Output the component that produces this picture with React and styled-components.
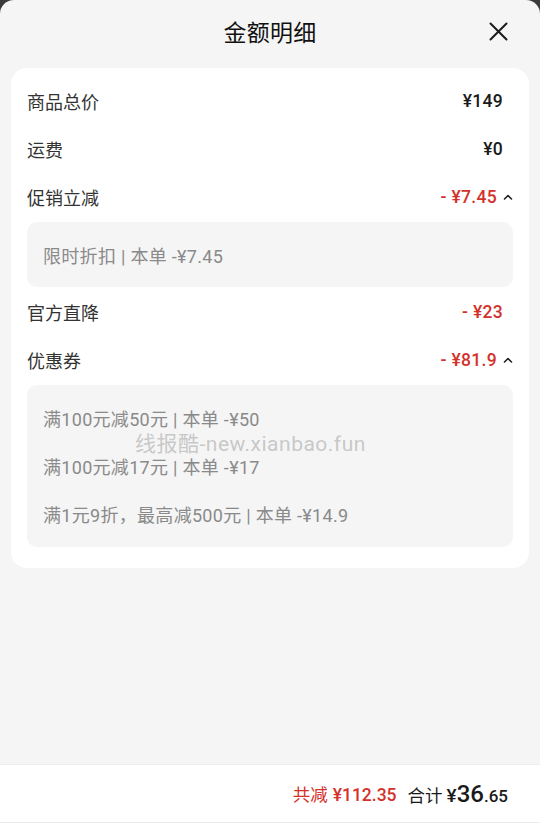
import React from "react";
import styled, { createGlobalStyle } from "styled-components";

const Global = createGlobalStyle`
  html, body { margin: 0; padding: 0; background: #3a3a3a; }
  body { font-family: Roboto, "Noto Sans CJK SC", sans-serif; }
  * { box-sizing: border-box; }
`;

const RED = "#d4312b";

const Sheet = styled.div`
  width: 540px;
  height: 826px;
  background: #f5f5f5;
  border-radius: 14px 14px 0 0;
  display: flex;
  flex-direction: column;
  overflow: hidden;
  position: relative;
`;

const Header = styled.div`
  height: 62px;
  display: flex;
  align-items: center;
  justify-content: center;
  position: relative;
  flex-shrink: 0;
`;

const Title = styled.div`
  font-size: 23px;
  font-weight: 400;
  color: #111;
  letter-spacing: 0.3px;
`;

const Close = styled.button`
  position: absolute;
  right: 32px;
  top: 22px;
  width: 19px;
  height: 19px;
  padding: 0;
  border: 0;
  background: none;
  display: flex;
`;

const Card = styled.div`
  margin: 6px 11px 0;
  background: #fff;
  border-radius: 16px;
  padding: 9px 16px 20px;
  position: relative;
`;

const Row = styled.div`
  height: 48px;
  display: flex;
  align-items: center;
  justify-content: space-between;
`;

const Label = styled.div`
  font-size: 18px;
  color: #333;
`;

const Value = styled.div`
  display: flex;
  align-items: center;
  gap: 6px;
  padding-right: ${(p) => (p.$chevron ? "0" : "10px")};
  font-size: 17.5px;
  font-weight: 500;
  letter-spacing: 0.3px;
  color: ${(p) => (p.$red ? RED : "#1a1a1a")};
`;

const Chevron = styled.svg`
  width: 10px;
  height: 10px;
  display: block;
`;

const Detail = styled.div`
  background: #f5f5f5;
  border-radius: 10px;
  padding: ${(p) => (p.$pad ? p.$pad : "9px 16px")};
  margin: 1px 0;
`;

const DetailLine = styled.div`
  height: 48px;
  display: flex;
  align-items: center;
  font-size: 18px;
  letter-spacing: 0.3px;
  color: #8a8a8a;
  white-space: pre;
`;

const Watermark = styled.div`
  position: absolute;
  left: 124px;
  top: 359px;
  font-size: 21px;
  color: rgba(185, 185, 185, 0.75);
  letter-spacing: 0.5px;
  pointer-events: none;
`;

const Spacer = styled.div`
  flex: 1;
`;

const BottomBar = styled.div`
  height: 58px;
  background: #fff;
  border-top: 1px solid #ececec;
  display: flex;
  align-items: center;
  justify-content: flex-end;
  padding: 0 32px 0 0;
  gap: 11px;
  flex-shrink: 0;
`;

const Saved = styled.div`
  font-size: 17.5px;
  color: ${RED};
  display: flex;
  align-items: baseline;
  gap: 5px;
`;

const SavedAmt = styled.span`
  font-weight: 500;
`;

const Total = styled.div`
  font-size: 17.5px;
  color: #1a1a1a;
  display: flex;
  align-items: baseline;
  gap: 4px;
`;

const Price = styled.span`
  font-weight: 500;
  font-size: 19px;
`;

const Big = styled.span`
  font-size: 24px;
  font-weight: 500;
`;

const Small = styled.span`
  font-size: 17px;
`;

const BottomStrip = styled.div`
  height: 4px;
  background: #fff;
  border-top: 1px solid #ebebeb;
  flex-shrink: 0;
`;

const Up = () => (
  <Chevron viewBox="0 0 10 10">
    <path d="M1.5 7 L5 3.5 L8.5 7" fill="none" stroke="#222" strokeWidth="1.6" strokeLinecap="round" strokeLinejoin="round" />
  </Chevron>
);

export default function App() {
  return (
    <>
      <Global />
      <Sheet>
        <Header>
          <Title>金额明细</Title>
          <Close aria-label="关闭">
            <svg width="19" height="19" viewBox="0 0 19 19">
              <path d="M1.5 1.5 L17.5 17.5 M17.5 1.5 L1.5 17.5" stroke="#1a1a1a" strokeWidth="2" strokeLinecap="round" />
            </svg>
          </Close>
        </Header>
        <Card>
          <Row>
            <Label>商品总价</Label>
            <Value>¥149</Value>
          </Row>
          <Row>
            <Label>运费</Label>
            <Value>¥0</Value>
          </Row>
          <Row>
            <Label>促销立减</Label>
            <Value $red $chevron>
              - ¥7.45
              <Up />
            </Value>
          </Row>
          <Detail $pad="9px 16px 8px">
            <DetailLine>限时折扣 | 本单 -¥7.45</DetailLine>
          </Detail>
          <Row>
            <Label>官方直降</Label>
            <Value $red>- ¥23</Value>
          </Row>
          <Row>
            <Label>优惠券</Label>
            <Value $red $chevron>
              - ¥81.9
              <Up />
            </Value>
          </Row>
          <Detail>
            <DetailLine>满100元减50元 | 本单 -¥50</DetailLine>
            <DetailLine>满100元减17元 | 本单 -¥17</DetailLine>
            <DetailLine>满1元9折，最高减500元 | 本单 -¥14.9</DetailLine>
          </Detail>
          <Watermark>线报酷-new.xianbao.fun</Watermark>
        </Card>
        <Spacer />
        <BottomBar>
          <Saved>
            共减<SavedAmt>¥112.35</SavedAmt>
          </Saved>
          <Total>
            合计
            <Price>
              ¥<Big>36</Big>
              <Small>.65</Small>
            </Price>
          </Total>
        </BottomBar>
        <BottomStrip />
      </Sheet>
    </>
  );
}
